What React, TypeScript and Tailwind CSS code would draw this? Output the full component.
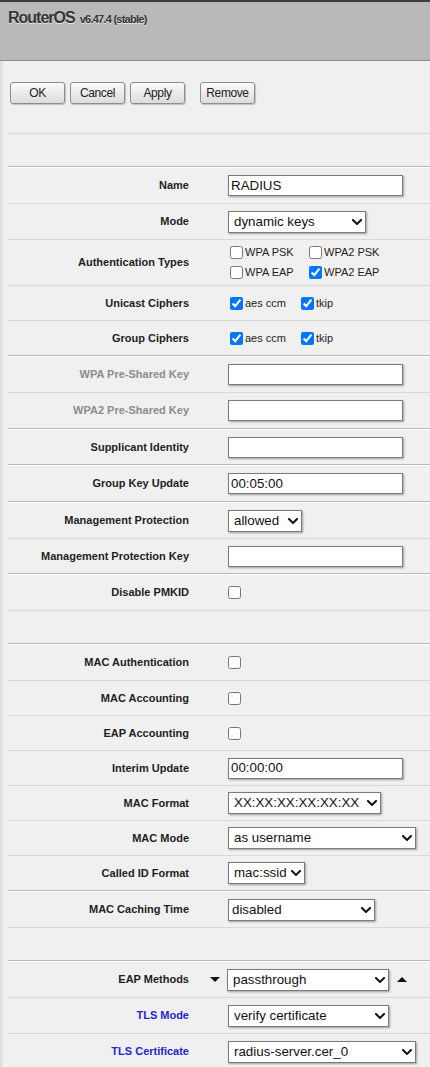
import React from "react";

const Sep = () => <div className="h-px bg-[#d9d9d9]" />;
const Dbl = () => (
  <div>
    <div className="h-px bg-[#b9b9b9]" />
    <div className="h-px bg-white" />
  </div>
);

type RowProps = {
  label: string;
  h: string;
  tone?: "normal" | "grey" | "blue";
  spacer?: React.ReactNode;
  spacerW?: string;
  children?: React.ReactNode;
};

const Row = ({ label, h, tone = "normal", spacer, spacerW = "w-[39px]", children }: RowProps) => {
  const color =
    tone === "grey" ? "text-[#8c8c8c]" : tone === "blue" ? "text-[#2626cf]" : "text-[#1e1e1e]";
  return (
    <div className={`flex items-center ${h}`}>
      <div className={`w-[181px] shrink-0 text-right text-[11px] font-bold leading-none ${color}`}>{label}</div>
      <div className={`${spacerW} shrink-0 flex items-center`}>{spacer}</div>
      <div className="flex items-center">{children}</div>
    </div>
  );
};

const TextBox = ({ value = "" }: { value?: string }) => (
  <div className="w-[175px] h-[21px] bg-white border border-[#7b7b7b] shadow-[1px_1px_2px_rgba(0,0,0,0.35)] px-[2px] flex items-center text-[13.33px] text-[#111] leading-none">
    {value}
  </div>
);

const Chevron = () => (
  <svg width="10" height="6" viewBox="0 0 10 6" className="shrink-0">
    <path d="M1 1l4 4 4-4" fill="none" stroke="#111" strokeWidth="2" strokeLinecap="square" />
  </svg>
);

const Select = ({ value, w, pl = "pl-[5px]" }: { value: string; w: string; pl?: string }) => (
  <div
    className={`${w} h-[22px] bg-white border border-[#7b7b7b] shadow-[1px_1px_2px_rgba(0,0,0,0.35)] ${pl} pr-[3px] flex items-center justify-between text-[13.33px] text-[#111] leading-none`}
  >
    <span className="whitespace-nowrap">{value}</span>
    <Chevron />
  </div>
);

const Check = ({ checked = false, ml = "" }: { checked?: boolean; ml?: string }) => (
  <input type="checkbox" defaultChecked={checked} className={`w-[13px] h-[13px] m-0 ${ml}`} />
);

const CheckItem = ({ label, checked, w }: { label: string; checked?: boolean; w: string }) => (
  <div className={`flex items-center ${w}`}>
    <Check checked={checked} ml="ml-[2px]" />
    <span className="ml-[2px] text-[11px] text-[#1e1e1e] leading-none whitespace-nowrap">{label}</span>
  </div>
);

const Btn = ({ children }: { children: React.ReactNode }) => (
  <button className="w-[55px] h-[22px] rounded-[3px] border border-[#8e8e8e] bg-linear-to-b from-[#fbfbfb] to-[#dcdcdc] shadow-[1px_1px_1px_rgba(0,0,0,0.2)] text-[12px] tracking-[-0.4px] text-[#222] leading-none flex items-center justify-center">
    {children}
  </button>
);

const TriDown = () => (
  <svg width="10" height="5" viewBox="0 0 10 5" className="ml-[21px]">
    <path d="M0 0h10L5 5z" fill="#111" />
  </svg>
);
const TriUp = () => (
  <svg width="10" height="5" viewBox="0 0 10 5" className="ml-[8px]">
    <path d="M0 5h10L5 0z" fill="#111" />
  </svg>
);

export default function App() {
  return (
    <div className="w-[430px] min-h-[1067px] bg-[#f0f0f0] font-['Liberation_Sans',Arial,sans-serif] overflow-hidden">
      <div className="h-[61px] bg-[#b9b9b9] border-t-2 border-b border-t-[#3c3c3c] border-b-[#8a8a8a] pl-[8px] pt-[8px]">
        <div className="flex items-baseline leading-[16px] text-[#353535] [text-shadow:0_1px_0_rgba(255,255,255,0.6)]">
          <span className="text-[16px] font-bold tracking-[-1px] leading-[16px]">RouterOS</span>
          <span className="ml-[5px] text-[11px] font-bold tracking-[-0.75px] leading-[16px]">v6.47.4 (stable)</span>
        </div>
      </div>
      <div className="border-l-[3px] border-[#e2e2e2] pl-[5px]">
        <div className="h-[72px] pt-[21px] flex items-start pl-[2px]">
          <div className="flex gap-[5px]">
            <Btn>OK</Btn>
            <Btn>Cancel</Btn>
            <Btn>Apply</Btn>
          </div>
          <div className="ml-[15px]">
            <Btn>Remove</Btn>
          </div>
        </div>
        <Sep />
        <div className="h-[32px]" />
        <Dbl />
        <Row label="Name" h="h-[35px]">
          <TextBox value="RADIUS" />
        </Row>
        <Sep />
        <Row label="Mode" h="h-[35px]">
          <Select value="dynamic keys" w="w-[138px]" />
        </Row>
        <Sep />
        <Row label="Authentication Types" h="h-[45px]">
          <div className="grid grid-cols-[79px_auto]">
            <div className="h-[20px] flex items-center"><CheckItem label="WPA PSK" w="w-[79px]" /></div>
            <div className="h-[20px] flex items-center"><CheckItem label="WPA2 PSK" w="" /></div>
            <div className="h-[20px] flex items-center"><CheckItem label="WPA EAP" w="w-[79px]" /></div>
            <div className="h-[20px] flex items-center"><CheckItem label="WPA2 EAP" checked w="" /></div>
          </div>
        </Row>
        <Sep />
        <Row label="Unicast Ciphers" h="h-[34px]">
          <CheckItem label="aes ccm" checked w="w-[71px]" />
          <CheckItem label="tkip" checked w="" />
        </Row>
        <Sep />
        <Row label="Group Ciphers" h="h-[34px]">
          <CheckItem label="aes ccm" checked w="w-[71px]" />
          <CheckItem label="tkip" checked w="" />
        </Row>
        <Dbl />
        <Row label="WPA Pre-Shared Key" h="h-[35px]" tone="grey">
          <TextBox />
        </Row>
        <Sep />
        <Row label="WPA2 Pre-Shared Key" h="h-[35px]" tone="grey">
          <TextBox />
        </Row>
        <Dbl />
        <Row label="Supplicant Identity" h="h-[34px]">
          <TextBox />
        </Row>
        <Dbl />
        <Row label="Group Key Update" h="h-[35px]">
          <TextBox value="00:05:00" />
        </Row>
        <Dbl />
        <Row label="Management Protection" h="h-[35px]">
          <Select value="allowed" w="w-[74px]" />
        </Row>
        <Sep />
        <Row label="Management Protection Key" h="h-[34px]">
          <TextBox />
        </Row>
        <Dbl />
        <Row label="Disable PMKID" h="h-[35px]">
          <Check />
        </Row>
        <Sep />
        <div className="h-[32px]" />
        <Dbl />
        <Row label="MAC Authentication" h="h-[35px]">
          <Check />
        </Row>
        <Sep />
        <Row label="MAC Accounting" h="h-[34px]">
          <Check />
        </Row>
        <Sep />
        <Row label="EAP Accounting" h="h-[34px]">
          <Check />
        </Row>
        <Sep />
        <Row label="Interim Update" h="h-[34px]">
          <TextBox value="00:00:00" />
        </Row>
        <Sep />
        <Row label="MAC Format" h="h-[34px]">
          <Select value="XX:XX:XX:XX:XX:XX" w="w-[153px]" />
        </Row>
        <Sep />
        <Row label="MAC Mode" h="h-[34px]">
          <Select value="as username" w="w-[188px]" />
        </Row>
        <Sep />
        <Row label="Called ID Format" h="h-[34px]">
          <Select value="mac:ssid" w="w-[77px]" />
        </Row>
        <Dbl />
        <Row label="MAC Caching Time" h="h-[35px]">
          <Select value="disabled" w="w-[147px]" pl="pl-[3px]" />
        </Row>
        <Sep />
        <div className="h-[32px]" />
        <Dbl />
        <Row label="EAP Methods" h="h-[35px]" spacer={<TriDown />} spacerW="w-[38px]">
          <Select value="passthrough" w="w-[162px]" />
          <TriUp />
        </Row>
        <Sep />
        <Row label="TLS Mode" h="h-[35px]" tone="blue">
          <Select value="verify certificate" w="w-[161px]" />
        </Row>
        <Sep />
        <Row label="TLS Certificate" h="h-[35px]" tone="blue">
          <Select value="radius-server.cer_0" w="w-[188px]" />
        </Row>
      </div>
    </div>
  );
}
